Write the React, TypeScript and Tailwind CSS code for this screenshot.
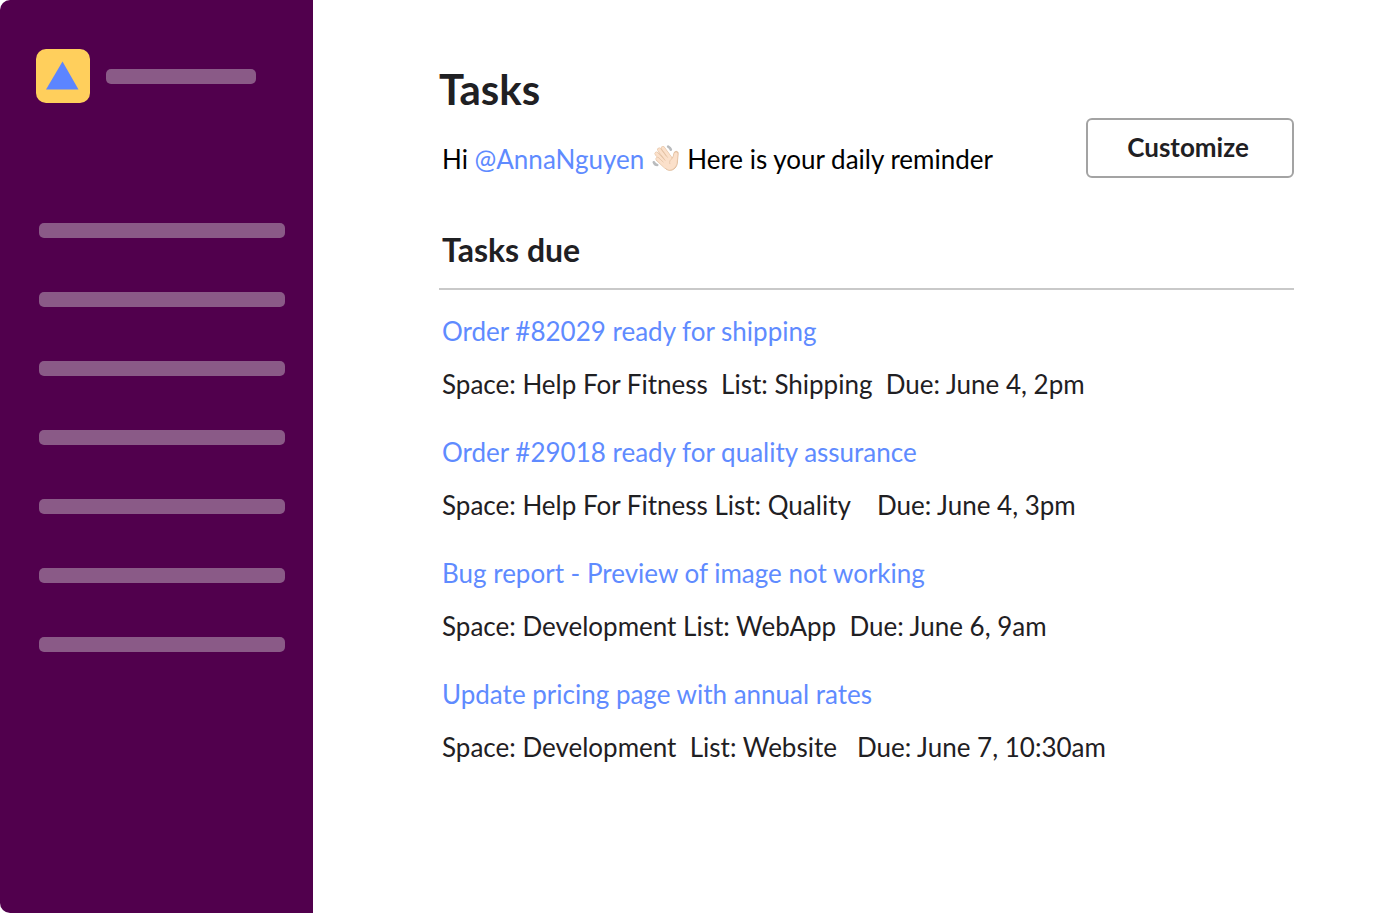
import clsx from "clsx";

type Task = {
    title: string;
    details: string;
};

const tasks: Task[] = [
    {
        title: "Order #82029 ready for shipping",
        details: "Space: Help For Fitness  List: Shipping  Due: June 4, 2pm",
    },
    {
        title: "Order #29018 ready for quality assurance",
        details: "Space: Help For Fitness List: Quality    Due: June 4, 3pm",
    },
    {
        title: "Bug report - Preview of image not working",
        details: "Space: Development List: WebApp  Due: June 6, 9am",
    },
    {
        title: "Update pricing page with annual rates",
        details: "Space: Development  List: Website   Due: June 7, 10:30am",
    },
];

function Placeholder({ className }: { className?: string }) {
    return (
        <div
            className={clsx("h-[15px] rounded-[5px] bg-[#8a5a87]", className)}
        />
    );
}

function WavingHand() {
    return (
        <svg
            viewBox="36 24 80 84"
            className="mx-2 inline-block h-7 w-[27px] align-[-3px]"
            role="img"
            aria-label="Waving hand"
        >
            {/* Motion marks */}
            <g stroke="#b9bbbd" strokeWidth="8" strokeLinecap="round" fill="none">
                <path d="M84 32c4 2 7 5 8 9" />
                <path d="M41 79c2 5 5 8 10 8" />
            </g>
            {/* Outline, then the skin on top of it */}
            <g stroke="#e2bf9f" strokeLinecap="round" strokeLinejoin="round" fill="none">
                <path strokeWidth="12" d="M68 36 90 66M57 41 82 74M49 53 76 82M52 69 76 92" />
                <path
                    strokeWidth="3"
                    fill="#e2bf9f"
                    d="M80 54 95 66c4-2 5-7 6-13 1-9 13-9 13-1 0 8-2 15-2 23 0 19-12 29-25 28-9-1-15-9-19-16Z"
                />
            </g>
            <g stroke="#fbe0ca" strokeLinecap="round" strokeLinejoin="round" fill="none">
                <path strokeWidth="9" d="M68 36 90 66M57 41 82 74M49 53 76 82M52 69 76 92" />
                <path
                    fill="#fbe0ca"
                    strokeWidth="1"
                    d="M80 56 95 69c5-2 6-8 7-14 1-7 10-7 10-1 0 7-2 14-2 21 0 17-11 27-23 26-8-1-13-8-17-15Z"
                />
            </g>
            <path
                d="M65 41 82 64M56 51 75 73M54 64 69 78M95 68c-6 4-8 9-6 15"
                stroke="#e5c4a7"
                strokeWidth="2.500"
                strokeLinecap="round"
                fill="none"
            />
        </svg>
    );
}

function Sidebar() {
    return (
        <aside className="mb-px w-[313px] shrink-0 rounded-l-[10px] bg-[#51004d] pt-[49px]">
            <div className="flex items-center gap-4 pl-9">
                <svg viewBox="0 0 54 54" className="size-[54px]" aria-hidden="true">
                    <rect width="54" height="54" rx="10" fill="#ffcf5c" />
                    <path d="M26.500 12.500 42.500 40.500H10Z" fill="#5c85ff" />
                </svg>
                <Placeholder className="w-[150px]" />
            </div>
            <div className="mt-[120px] flex flex-col gap-[54px] pr-7 pl-[39px]">
                {Array.from({ length: 7 }, (_, i) => (
                    <Placeholder key={i} />
                ))}
            </div>
        </aside>
    );
}

export default function App() {
    return (
        <div className="flex min-h-screen bg-white font-['Lato',sans-serif] text-[#1f2023]">
            <Sidebar />
            <main className="flex-1 pt-[65px] pr-[84px] pl-[126px]">
                <header className="flex items-end justify-between">
                    <div>
                        <h1 className="text-[42px] leading-[48px] font-bold">Tasks</h1>
                        <p className="mt-[26px] pl-[3px] text-[26px] leading-10 text-black">
                            Hi{" "}
                            <a href="#anna" className="text-[#5f8bff]">
                                @AnnaNguyen
                            </a>
                            <WavingHand />
                            Here is your daily reminder
                        </p>
                    </div>
                    <button
                        type="button"
                        className="mb-px h-[60px] w-52 rounded-md border-2 border-[#a3a3a3] pr-1 pb-0.5 text-[26px] leading-8 font-bold"
                    >
                        Customize
                    </button>
                </header>

                <section>
                    <h2 className="mt-[51px] border-b-2 border-[#c9c9c9] pb-[18px] pl-[3px] text-[32px] leading-10 font-bold">
                        Tasks due
                    </h2>
                    <ul className="mt-[21px] flex flex-col gap-7 pl-[3px] text-[26px] leading-10">
                        {tasks.map((task) => (
                            <li key={task.title} className="flex flex-col gap-[13px]">
                                <a href="#task" className="self-start text-[#5f8bff]">
                                    {task.title}
                                </a>
                                <p className="whitespace-pre">{task.details}</p>
                            </li>
                        ))}
                    </ul>
                </section>
            </main>
        </div>
    );
}
